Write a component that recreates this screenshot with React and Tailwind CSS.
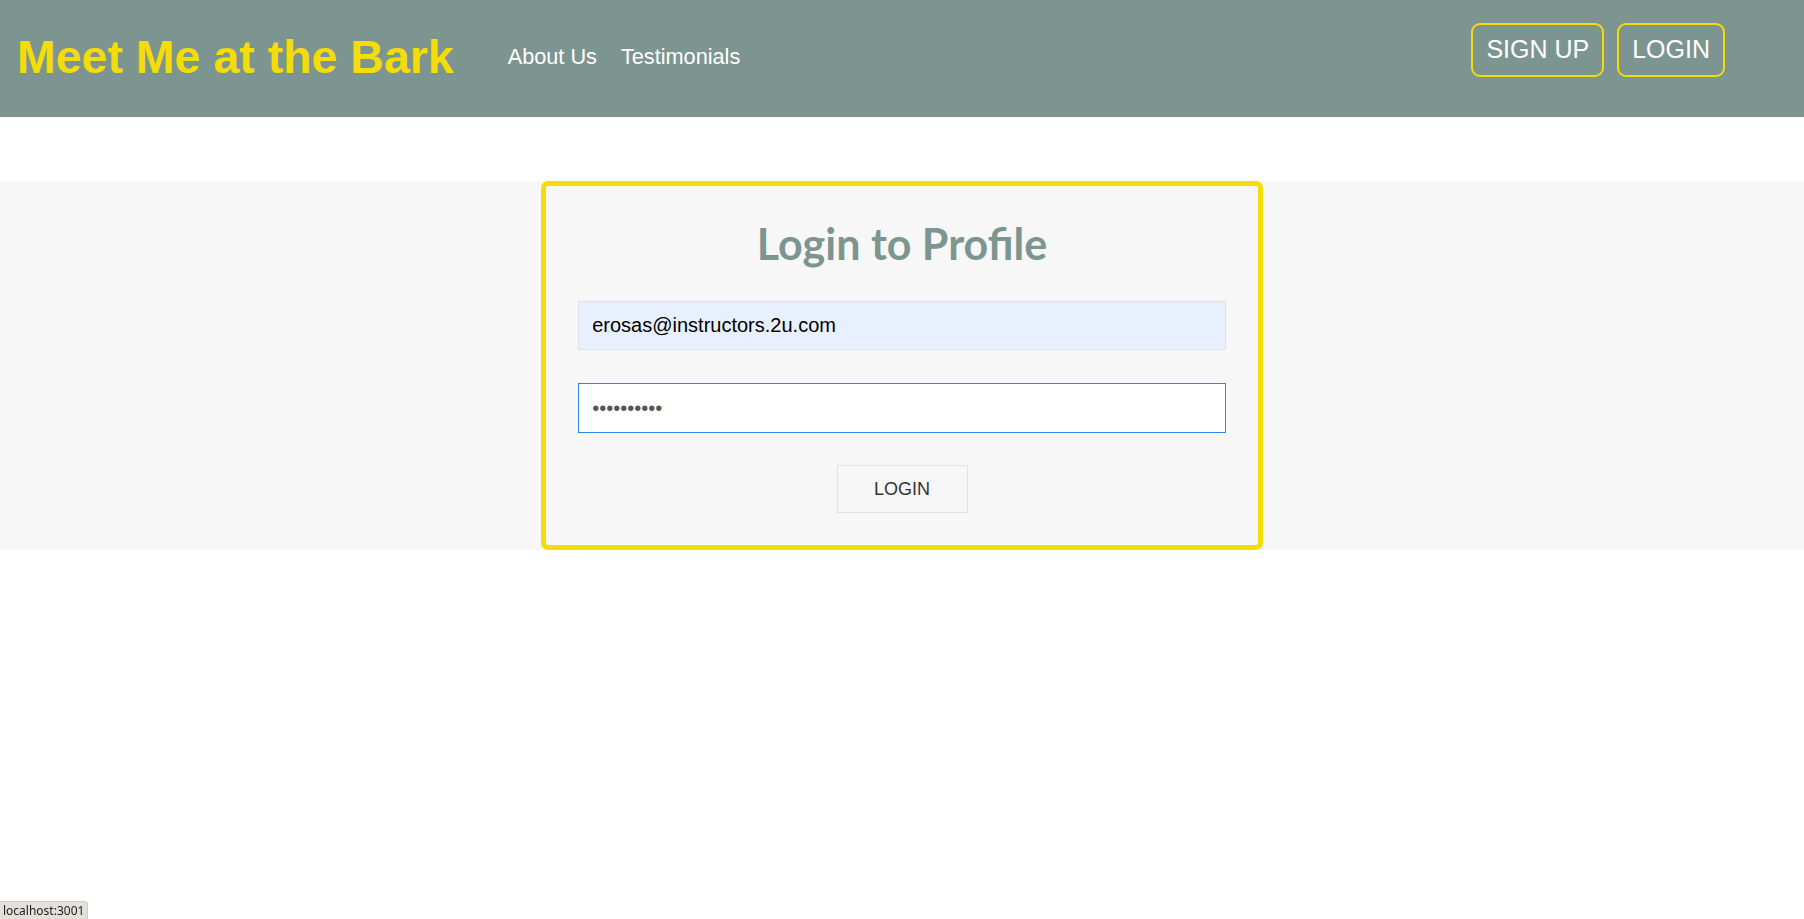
import { useState } from 'react';

export default function App() {
  const [email, setEmail] = useState('erosas@instructors.2u.com');
  const [password, setPassword] = useState('bark123456');

  return (
    <div className="min-h-screen bg-white font-['Liberation_Sans',Arial,sans-serif]">
      {/* top bar */}
      <header className="h-[117px] bg-[#7d9590] flex">
        <div className="flex items-center pb-[3px]">
          <h1 className="pl-[17px] text-[46.5px] leading-[54px] font-bold text-[#f4dc08]">Meet Me at the Bark</h1>
          <nav className="ml-[54px] flex gap-[24px] text-[21.7px] text-white">
            <a href="#">About Us</a>
            <a href="#">Testimonials</a>
          </nav>
        </div>
        <div className="ml-auto mr-[79px] mt-[23px] flex gap-[13px] self-start">
          <button className="h-[54px] px-[13px] border-2 border-[#f4dc08] rounded-[9px] text-[25px] text-white">SIGN UP</button>
          <button className="h-[54px] px-[13px] border-2 border-[#f4dc08] rounded-[9px] text-[25px] text-white">LOGIN</button>
        </div>
      </header>

      {/* login form */}
      <main className="mt-[64px] bg-[#f7f7f7]">
        <form
          onSubmit={(e) => e.preventDefault()}
          className="mx-auto w-[40%] border-[5px] border-[#f4dc08] rounded-[7px] p-8 flex flex-col items-center"
        >
          <h2 className="mt-[3px] text-[43px] leading-[46px] font-bold text-[#7d9590] font-['Lato',sans-serif] mb-[34px]">Login to Profile</h2>
          <input
            type="email"
            value={email}
            onChange={(e) => setEmail(e.target.value)}
            className="w-full h-[49px] px-[13px] bg-[#e8f0fe] border border-[#dce2ea] text-[20px] text-black outline-none mb-[33px]"
          />
          <input
            type="password"
            value={password}
            onChange={(e) => setPassword(e.target.value)}
            className="w-full h-[50px] px-[13px] bg-white border border-[#2b87e8] text-[20px] text-[#555] outline-none mb-[32px]"
          />
          <button type="submit" className="w-[131px] h-[48px] bg-[#f7f7f7] border border-[#e2e2e2] text-[18px] text-[#333]">LOGIN</button>
        </form>
      </main>

      {/* browser status bubble */}
      <div className="fixed bottom-0 left-0 h-[18px] px-[3px] bg-[#e4e0dc] border-t border-r border-[#cfcac5] rounded-tr-[4px] text-[12px] leading-[17px] text-[#222] font-['Noto_Sans',sans-serif]">localhost:3001</div>
    </div>
  );
}
